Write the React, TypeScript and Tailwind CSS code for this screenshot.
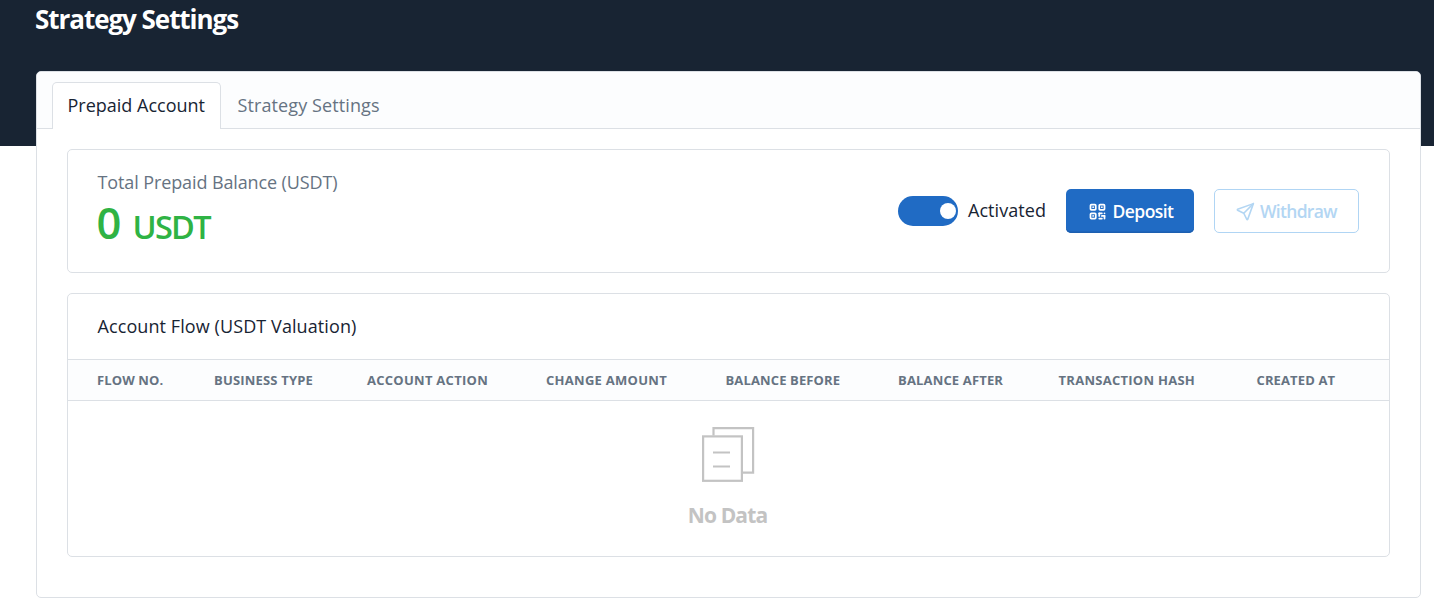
import { TbQrcode, TbSend } from 'react-icons/tb';

const columns = [
  { label: 'Flow No.', className: 'tracking-[0.1px]' },
  { label: 'Business Type', className: 'tracking-[0.18px]' },
  { label: 'Account Action', className: 'tracking-[0.27px]' },
  { label: 'Change Amount', className: 'tracking-[0.28px]' },
  { label: 'Balance Before', className: 'tracking-[0.13px]' },
  { label: 'Balance After', className: 'tracking-[0.16px]' },
  { label: 'Transaction Hash', className: 'tracking-[0.27px]' },
  { label: 'Created At', className: 'tracking-[0.12px]' },
];

function EmptyIcon() {
  return (
    <svg width="54" height="56" viewBox="0 0 54 56" fill="none" stroke="#c3c3c3" strokeWidth="2.2">
      <path d="M12.5 9.5V2.1h39.6v44.6H42" />
      <rect x="2.1" y="10.4" width="38.8" height="44.4" />
      <path d="M12 26.5h17M12 40.5h17" />
    </svg>
  );
}

function BalanceCard() {
  return (
    <section className="flex h-[124px] items-center justify-between rounded-[5px] border border-[#dce0e5] pl-[29.5px] pr-[30px]">
      <div className="self-start pt-[18px]">
        <div className="text-[18px] leading-7 tracking-[-0.11px] text-[#667382]">Total Prepaid Balance (USDT)</div>
        <div className="mt-1 flex items-baseline font-semibold leading-[46px] text-[#2fb344]">
          <span className="-ml-px w-9 text-[43.5px]">0</span>
          <span className="text-[32.5px] tracking-[-1.7px]">USDT</span>
        </div>
      </div>
      <div className="flex items-center">
        <label className="mr-5 flex items-center">
          <span role="switch" aria-checked="true" className="flex h-[30px] w-[60px] items-center justify-end rounded-full bg-[#206bc4] pr-0.5">
            <span className="size-4 rounded-full bg-white" />
          </span>
          <span className="-mt-0.5 ml-2.5 w-[78px] text-[18px] leading-7 tracking-[0.05px]">Activated</span>
        </label>
        <button className="mr-5 flex h-11 w-32 items-center rounded-[5px] bg-[#206bc4] pl-[20.5px] text-[17.5px] font-semibold tracking-[-0.55px] text-white shadow-[inset_0_-1.5px_0_#1c5fb0]">
          <TbQrcode size={21} strokeWidth={2} className="mr-[5px]" />
          Deposit
        </button>
        <button disabled className="flex h-11 w-[145px] items-center rounded-[5px] border border-[#b0d5f4] pl-5 text-[17.5px] font-semibold tracking-[-0.7px] text-[#b3d6f3]">
          <TbSend size={21} strokeWidth={1.8} className="mr-1" />
          Withdraw
        </button>
      </div>
    </section>
  );
}

function FlowCard() {
  return (
    <section className="mt-5 h-[264px] rounded-[5px] border border-[#dce0e5]">
      <h3 className="h-[65px] pl-[29.5px] text-[18px] leading-[65px] tracking-[0.09px]">Account Flow (USDT Valuation)</h3>
      <div className="grid h-[42px] grid-cols-[117px_153px_179px_179.5px_172.5px_160.5px_198px_1fr] items-center border-y border-[#dce0e5] bg-[#fcfdfe] pl-[29px] pt-0.5 text-[13px] font-bold uppercase text-[#667382]">
        {columns.map((col) => (
          <div key={col.label} className={col.className}>{col.label}</div>
        ))}
      </div>
      <div className="flex flex-col items-center pr-0.5 pt-[25px]">
        <EmptyIcon />
        <div className="mt-[17px] text-[21px] font-bold leading-8 tracking-[-0.85px] text-[#c3c3c3]">No Data</div>
      </div>
    </section>
  );
}

export default function App() {
  return (
    <div className="h-[614px] overflow-hidden bg-white font-['Open_Sans','Noto_Sans',sans-serif] text-[#182433]">
      <header className="h-[146px] bg-[#182433] pl-[35px]">
        <h1 className="text-[26px] font-bold leading-[38px] tracking-[-1.05px] text-white">Strategy Settings</h1>
      </header>
      <main className="relative -mt-[75px] ml-9 mr-[13px] h-[527px] rounded-[5px] border border-[#dce0e5] bg-white">
        <nav className="flex h-[57px] items-end rounded-t border-b border-[#dce0e5] bg-[#fcfdfe] pl-[15px] text-[18px]">
          <div className="-mb-px h-[47px] w-[169px] rounded-t-[5px] border border-b-0 border-[#dce0e5] bg-white pl-[14.5px] leading-[45px]">
            Prepaid Account
          </div>
          <div className="h-[46px] pl-[16.5px] leading-[46px] tracking-[0.1px] text-[#667382]">Strategy Settings</div>
        </nav>
        <div className="px-[30px] pt-5">
          <BalanceCard />
          <FlowCard />
        </div>
      </main>
    </div>
  );
}
